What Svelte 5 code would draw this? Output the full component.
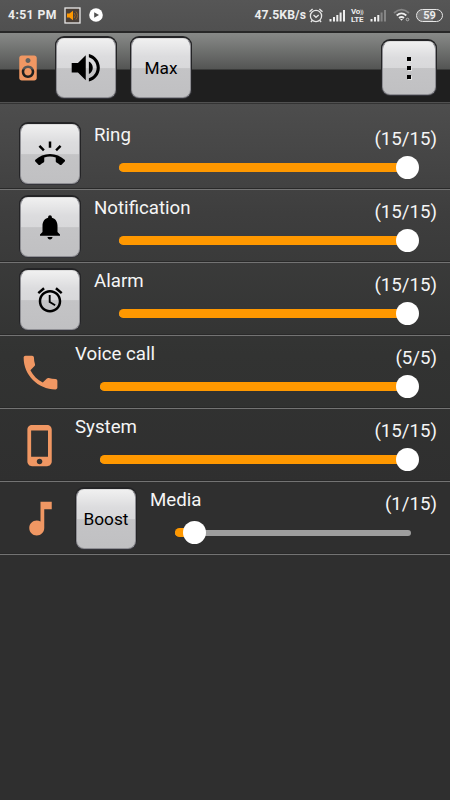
<script>
    const icons = {
        speaker: "M17 2H7c-1.1 0-2 .9-2 2v16c0 1.1.9 1.99 2 1.99L17 22c1.1 0 2-.9 2-2V4c0-1.1-.9-2-2-2zm-5 2c1.1 0 2 .9 2 2s-.9 2-2 2c-1.11 0-2-.9-2-2s.89-2 2-2zm0 16c-2.76 0-5-2.24-5-5s2.24-5 5-5 5 2.24 5 5-2.24 5-5 5zm0-8c-1.66 0-3 1.34-3 3s1.34 3 3 3 3-1.34 3-3-1.34-3-3-3z",
        volume: "M3 9v6h4l5 5V4L7 9H3zm13.5 3c0-1.77-1.02-3.29-2.5-4.03v8.05c1.48-.73 2.5-2.25 2.5-4.02zM14 3.23v2.06c2.89.86 5 3.54 5 6.71s-2.11 5.85-5 6.71v2.06c4.01-.91 7-4.49 7-8.77s-2.99-7.86-7-8.77z",
        ring: "M23.71 16.67C20.66 13.78 16.54 12 12 12 7.46 12 3.34 13.78.29 16.67c-.18.18-.29.43-.29.71 0 .28.11.53.29.71l2.48 2.48c.18.18.43.29.71.29.27 0 .52-.11.7-.28.79-.74 1.69-1.36 2.66-1.85.33-.16.56-.5.56-.9v-3.1c1.45-.48 3-.73 4.6-.73 1.6 0 3.15.25 4.6.72v3.1c0 .39.23.74.56.9.98.49 1.87 1.12 2.67 1.85.18.18.43.28.7.28.28 0 .53-.11.71-.29l2.48-2.48c.18-.18.29-.43.29-.71 0-.28-.12-.52-.3-.7zM21.16 6.26l-1.41-1.41-3.56 3.55 1.41 1.41s3.45-3.52 3.56-3.55zM13 2h-2v5h2V2zM6.4 9.81L7.81 8.4 4.26 4.84 2.84 6.26c.11.03 3.56 3.55 3.56 3.55z",
        bell: "M12 22c1.1 0 2-.9 2-2h-4c0 1.1.89 2 2 2zm6-6v-5c0-3.07-1.64-5.64-4.5-6.32V4c0-.83-.67-1.5-1.5-1.5s-1.5.67-1.5 1.5v.68C7.63 5.36 6 7.92 6 11v5l-2 2v1h16v-1l-2-2z",
        alarm: "M22 5.72l-4.6-3.86-1.29 1.53 4.6 3.86L22 5.72zM7.88 3.39L6.6 1.86 2 5.71l1.29 1.53 4.59-3.85zM12.5 8H11v6l4.75 2.85.75-1.23-4-2.37V8zM12 4c-4.97 0-9 4.03-9 9s4.02 9 9 9c4.97 0 9-4.03 9-9s-4.03-9-9-9zm0 16c-3.87 0-7-3.13-7-7s3.13-7 7-7 7 3.13 7 7-3.13 7-7 7z",
        phone: "M6.62 10.79c1.44 2.83 3.76 5.14 6.59 6.59l2.2-2.2c.27-.27.67-.36 1.02-.24 1.12.37 2.33.57 3.57.57.55 0 1 .45 1 1V20c0 .55-.45 1-1 1-9.39 0-17-7.61-17-17 0-.55.45-1 1-1h3.5c.55 0 1 .45 1 1 0 1.25.2 2.45.57 3.57.11.35.03.74-.25 1.02l-2.2 2.2z",
        device: "M15.5 1h-8C6.12 1 5 2.12 5 3.5v17C5 21.88 6.12 23 7.5 23h8c1.38 0 2.5-1.12 2.5-2.5v-17C18 2.12 16.88 1 15.5 1zm-4 21c-.83 0-1.5-.67-1.5-1.5s.67-1.5 1.5-1.5 1.5.67 1.5 1.5-.67 1.5-1.5 1.5zm4.5-4H7V4h9v14z",
        note: "M12 3v10.55c-.59-.34-1.27-.55-2-.55-2.21 0-4 1.79-4 4s1.79 4 4 4 4-1.79 4-4V7h4V3h-6z"
    };

    let channels = $state([
        { name: "Ring", icon: "ring", kind: "button", value: 15, max: 15 },
        { name: "Notification", icon: "bell", kind: "button", value: 15, max: 15 },
        { name: "Alarm", icon: "alarm", kind: "button", value: 15, max: 15 },
        { name: "Voice call", icon: "phone", kind: "plain", value: 5, max: 5 },
        { name: "System", icon: "device", kind: "plain", value: 15, max: 15 },
        { name: "Media", icon: "note", kind: "boost", value: 1, max: 15 }
    ]);

    const setAllMax = () => {
        channels.forEach((c) => c.value = c.max);
    }

    const boost = (channel) => {
        channel.value = channel.max;
    }
</script>

{#snippet icon(name, size)}
    <svg class="icon" width={size} height={size} viewBox="0 0 24 24"><path d={icons[name]} /></svg>
{/snippet}

{#snippet bars(dim)}
    <svg class="bars" width="17" height="13" viewBox="0 0 17 13">
        <path d="M.5 10h2v2.5h-2zM4 8h2v4.5H4zM7.3 6h2v6.500h-2z" />
        <path class:dim d="M10.6 3.5h2v9h-2zM14 1h2v11.5h-2z" />
    </svg>
{/snippet}

<div class="screen">
    <div class="status">
        <span class="time">4:51 PM</span>
        <svg class="app-icon" width="17" height="17" viewBox="0 0 17 17">
            <rect x="1" y="1" width="15" height="15" fill="#4a4039" stroke="#e8e8e8" stroke-width="1.3" />
            <path d="M3 6.5h2.4L9 3.8v9.4l-3.6-2.700H3z" fill="#ff9800" />
            <path d="M10.2 6q2 2.4 0 5M11.8 4.5q3.3 4 0 8" fill="none" stroke="#9b6424" stroke-width="1" />
        </svg>
        <svg class="play" width="14" height="14" viewBox="0 0 14 14">
            <circle cx="7" cy="7" r="6.8" fill="#fff" />
            <path d="M5.2 4.3L10 7l-4.8 2.7z" fill="#505050" />
        </svg>
        <span class="speed">47.5KB/s</span>
        <svg class="clock" width="14" height="15" viewBox="0 0 14 15" fill="none" stroke="#e6e6e6" stroke-width="1.3">
            <circle cx="7" cy="8" r="5.6" />
            <path d="M.5 3.8L3.600 1M13.500 3.800L10.400 1M4.500 7L7 9.300 9.700 7M3.200 12.500l-1.300 1.500M10.800 12.500l1.300 1.500" />
        </svg>
        {@render bars(false)}
        <span class="volte"><span>Vo<small>))</small></span><span>LTE</span></span>
        {@render bars(true)}
        <svg class="wifi" width="18" height="14" viewBox="0 0 18 14" fill="none" stroke-width="1.8">
            <path d="M1 5Q8.5-1.7 16 5" stroke="#858585" />
            <path d="M3.7 7.5Q8.5 3.3 13.3 7.5M6 10Q8.5 7.9 11 10" stroke="#eee" />
            <path d="M7 11h3l-1.5 1.8z" fill="#eee" />
            <circle cx="14.5" cy="11.5" r="1.3" stroke="#bbb" stroke-width=".9" />
        </svg>
        <span class="battery">59</span>
    </div>

    <div class="toolbar">
        <span class="logo">{@render icon("speaker", 30)}</span>
        <button class="btn" aria-label="Volume">{@render icon("volume", 37.5)}</button>
        <button class="btn max" onclick={setAllMax}>Max</button>
        <button class="btn menu" aria-label="Menu"><i></i><i></i><i></i></button>
    </div>

    <div class="list">
        {#each channels as channel}
            <div class="row {channel.kind}">
                {#if channel.kind === "button"}
                    <button class="btn" aria-label={channel.name}>{@render icon(channel.icon, 30)}</button>
                {:else}
                    <span class="symbol">{@render icon(channel.icon, 45)}</span>
                {/if}
                {#if channel.kind === "boost"}
                    <button class="btn" onclick={() => boost(channel)}>Boost</button>
                {/if}
                <div class="body">
                    <div class="labels">
                        <span>{channel.name}</span>
                        <span class="count">({channel.value}/{channel.max})</span>
                    </div>
                    <div class="slider" style="--pos: {channel.value / channel.max}">
                        <div class="fill"></div>
                        <div class="thumb"></div>
                    </div>
                </div>
            </div>
        {/each}
    </div>
</div>

<style>
    :global(body) {
        margin: 0;
        background: #2f2f2f;
    }
    .screen {
        display: flex;
        flex-direction: column;
        width: 450px;
        height: 800px;
        overflow: hidden;
        font-family: Roboto, sans-serif;
        color: #f5f5f5;
        background: #2f2f2f;
    }
    .icon {
        display: block;
        flex: none;
        fill: currentColor;
    }

    /* status bar */
    .status {
        display: flex;
        align-items: center;
        box-sizing: border-box;
        height: 31px;
        padding: 0 7px 1px 8px;
        font-size: 12.2px;
        font-weight: 700;
        color: #ececec;
        background: linear-gradient(#565656, #505050);
    }
    .status svg {
        flex: none;
    }
    .time {
        width: 56px;
        letter-spacing: 0.4px;
        white-space: nowrap;
    }
    .play {
        margin-left: 8px;
    }
    .speed {
        margin-left: auto;
        letter-spacing: 0.1px;
    }
    .clock {
        margin: 0 6px 0 3px;
    }
    .bars {
        fill: #eee;
    }
    .bars .dim {
        fill: #858585;
    }
    .volte {
        display: flex;
        flex-direction: column;
        width: 14px;
        margin: 0 5px;
        font-size: 8px;
        line-height: 7px;
        letter-spacing: -0.2px;
        white-space: nowrap;
    }
    .volte small {
        font-size: 5px;
    }
    .wifi {
        margin: 0 5px 0 6px;
    }
    .battery {
        box-sizing: border-box;
        width: 27px;
        height: 13px;
        border: 1.5px solid #e6e6e6;
        border-radius: 7px;
        font-size: 11px;
        line-height: 11px;
        text-align: center;
        background: linear-gradient(90deg, #777 62%, #555 62%);
    }

    /* toolbar */
    .toolbar {
        display: flex;
        align-items: flex-start;
        box-sizing: border-box;
        height: 73px;
        padding: 4.5px 14px 0 12.5px;
        border-top: 2px solid #282828;
        background: linear-gradient(#888a88, #545554 36px, #1f1f1f 37px, #1f1f1f 69px, #505050 69px, #505050 70px, #333 70px);
    }
    .logo {
        margin: 15px 13.5px 0 0;
        color: #f09763;
    }
    .btn {
        display: flex;
        flex: none;
        align-items: center;
        justify-content: center;
        width: 60px;
        height: 60px;
        padding: 0;
        border: 1px solid #8e8e93;
        border-top-color: #ddd;
        border-radius: 8px;
        font: 17.25px Roboto, sans-serif;
        color: #000;
        background: linear-gradient(#f0f0f0, #dcdcde 30%, #d8d8da 50%, #c4c4c6 51%, #c0c0c2);
        box-shadow: 0 -1px 0 1px #242426, 0 0 0 1px #34343a;
    }
    .max {
        margin-left: 15px;
    }
    .menu {
        flex-direction: column;
        gap: 5px;
        width: 54px;
        height: 54px;
        margin: 3px 0 0 auto;
    }
    .menu i {
        width: 4px;
        height: 4px;
        background: #000;
        box-shadow: 1px 1px 0 #e4e4e4;
    }

    /* channel list */
    .list {
        flex: 1;
        padding-top: 13px;
        background: linear-gradient(#4d4d4d, #3e3e3e 110px, #323332 250px, #2f2f2f 380px);
    }
    .row {
        display: flex;
        box-sizing: border-box;
        height: 73px;
        padding: 6.5px 13px 0 20px;
        border-bottom: 1px solid #737373;
        box-shadow: inset 0 -1px 0 #292929;
    }
    .symbol {
        width: 41px;
        margin: 7.5px 17px 0 -2.5px;
        color: #f09763;
    }
    .boost .symbol {
        margin-right: 17.5px;
    }
    .body {
        display: flex;
        flex: 1;
        flex-direction: column;
        margin-left: 14px;
    }
    .plain .body {
        margin-left: -0.5px;
    }
    .labels {
        display: flex;
        justify-content: space-between;
        height: 32px;
        font-size: 18.7px;
        line-height: 23px;
    }
    .count {
        padding-top: 4px;
    }
    .slider {
        --span: calc(100% - 8px);
        position: relative;
        height: 24px;
        margin: 0 26px 0 25px;
    }
    .slider::before {
        content: "";
        position: absolute;
        top: 9px;
        right: 0;
        left: 0;
        height: 6px;
        border-radius: 3px;
        background: #9e9e9e;
    }
    .fill {
        position: absolute;
        top: 7.5px;
        left: 0;
        width: calc(4px + var(--span) * var(--pos));
        height: 9px;
        border-radius: 4.5px;
        background: #ff9800;
    }
    .thumb {
        position: absolute;
        top: 0.5px;
        left: calc(4px + var(--span) * var(--pos) - 11.5px);
        width: 23px;
        height: 23px;
        border-radius: 50%;
        background: #fff;
    }
</style>
